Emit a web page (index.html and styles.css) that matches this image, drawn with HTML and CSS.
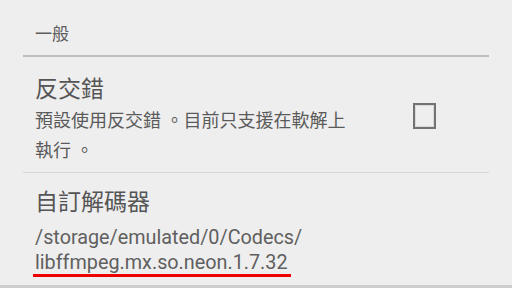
FILE: index.html
```html
<!DOCTYPE html>
<html lang="zh-Hant">
<head>
<meta charset="utf-8">
<link rel="stylesheet" href="styles.css">
</head>
<body>
<div class="screen">
  <div class="category">一般</div>
  <div class="category-rule"></div>
  <div class="pref pref-first">
    <div class="pref-text">
      <div class="pref-title">反交錯</div>
      <div class="pref-summary">預設使用反交錯 。目前只支援在軟解上執行 。</div>
    </div>
    <div class="pref-widget"><span class="checkbox"></span></div>
  </div>
  <div class="pref pref-second">
    <div class="pref-text">
      <div class="pref-title">自訂解碼器</div>
      <div class="pref-path">/storage/emulated/0/Codecs/<br><span class="marked">libffmpeg.mx.so.neon.1.7.32</span></div>
    </div>
  </div>
  <div class="bottom-edge"></div>
</div>
</body>
</html>
```
FILE: styles.css
```css
html, body {
  margin: 0;
  padding: 0;
  background: #eeeeee;
}
.screen {
  width: 512px;
  height: 288px;
  overflow: hidden;
  font-family: Roboto, "Noto Sans CJK TC", sans-serif;
  color: #5b5b5b;
}
.category {
  padding: 22px 0 0 35px;
  height: 33px;
  font-size: 17px;
  line-height: 24px;
  color: #5e5e5e;
  box-sizing: content-box;
}
.category-rule {
  margin-left: 23px;
  width: 466px;
  height: 2px;
  background: #bdbdbd;
}
.pref {
  margin-left: 23px;
  width: 466px;
  display: flex;
  box-sizing: border-box;
  padding-left: 12px;
}
.pref-first {
  height: 116px;
  border-bottom: 1px solid #d7d7d7;
  align-items: flex-start;
  padding-top: 17px;
}
.pref-second {
  height: 112px;
  align-items: flex-start;
  padding-top: 14px;
}
.pref-text {
  width: 326px;
}
.pref-title {
  font-size: 23px;
  line-height: 32px;
  color: #555555;
}
.pref-summary {
  font-size: 18px;
  line-height: 30px;
  margin-top: 0;
  color: #5a5a5a;
}
.pref-path {
  font-size: 19.8px;
  line-height: 25px;
  color: #5f5f5f;
  margin-top: 6px;
}
.marked {
  position: relative;
}
.marked::after {
  content: "";
  position: absolute;
  left: -2px;
  right: -3px;
  bottom: -3px;
  height: 3px;
  background: #ee0000;
}
.pref-widget {
  flex: 1;
  display: flex;
  justify-content: flex-start;
  padding-left: 52px;
  padding-top: 29px;
}
.checkbox {
  display: block;
  width: 19px;
  height: 22px;
  border: 2px solid #727272;
  box-shadow: inset 0 0 0 1px #d9d9d9;
}
.bottom-edge {
  height: 3px;
  background: #cdcdcd;
}
```
